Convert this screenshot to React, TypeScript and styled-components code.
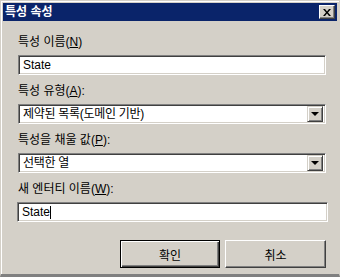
import React from 'react';
import styled, { createGlobalStyle } from 'styled-components';

const GlobalStyle = createGlobalStyle`
  html, body {
    margin: 0;
    padding: 0;
    background: #d4d0c8;
  }
  * {
    box-sizing: border-box;
  }
`;

const FONT = `"Liberation Sans", "Noto Sans CJK KR", sans-serif`;

const Window = styled.div`
  width: 340px;
  height: 277px;
  padding: 2px;
  background: #d4d0c8;
  border: 1px solid #d4d0c8;
  border-bottom: 3px solid #808080;
  box-shadow: inset 1px 1px #ffffff;
  display: flex;
  flex-direction: column;
  font-family: ${FONT};
  font-size: 12px;
  color: #000;
`;

const TitleBar = styled.div`
  height: 18px;
  background: #0a246a;
  display: flex;
  align-items: center;
  justify-content: space-between;
  padding: 0 2px 0 2px;
`;

const Title = styled.span`
  color: #ffffff;
  font-weight: bold;
  font-size: 12px;
  line-height: 14px;
`;

const CloseButton = styled.div`
  width: 16px;
  height: 14px;
  background: #d4d0c8;
  border: 1px solid;
  border-color: #ffffff #404040 #404040 #ffffff;
  box-shadow: inset -1px -1px #808080;
  display: flex;
  align-items: center;
  justify-content: center;
`;

const Body = styled.div`
  flex: 1;
  display: flex;
  flex-direction: column;
  padding: 14px 11px 0 15px;
`;

const Group = styled.div`
  display: flex;
  flex-direction: column;
  gap: 6px;
  margin-bottom: 9px;
`;

const Label = styled.div`
  line-height: 14px;
  height: 14px;
  white-space: nowrap;
`;

const Field = styled.div<{ $wide?: boolean }>`
  height: 20px;
  width: ${(p) => (p.$wide ? '311px' : '308px')};
  margin-left: ${(p) => (p.$wide ? '-1px' : '0')};
  background: #ffffff;
  border: 1px solid;
  border-color: #808080 #ffffff #ffffff #808080;
  box-shadow: inset 1px 1px #404040, inset -1px -1px #d4d0c8;
  display: flex;
  align-items: center;
  padding: 0 2px 0 4px;
  line-height: 16px;
  white-space: nowrap;
`;

const FieldText = styled.span`
  flex: 1;
  letter-spacing: -0.3px;
`;

const Caret = styled.span`
  display: inline-block;
  width: 1px;
  height: 13px;
  background: #000;
  vertical-align: middle;
`;

const DropButton = styled.div`
  width: 16px;
  height: 16px;
  background: #d4d0c8;
  border: 1px solid;
  border-color: #d4d0c8 #404040 #404040 #d4d0c8;
  box-shadow: inset 1px 1px #ffffff, inset -1px -1px #808080;
  display: flex;
  align-items: center;
  justify-content: center;
`;

const Arrow = styled.span`
  width: 0;
  height: 0;
  border-left: 4px solid transparent;
  border-right: 4px solid transparent;
  border-top: 4px solid #000;
`;

const ButtonRow = styled.div`
  display: flex;
  justify-content: flex-end;
  gap: 5px;
  margin-top: 9px;
`;

const Button = styled.div<{ $default?: boolean; $width: number }>`
  width: ${(p) => p.$width}px;
  height: 28px;
  background: #d4d0c8;
  border: 1px solid;
  border-color: ${(p) =>
    p.$default ? '#000000' : '#ffffff #404040 #404040 #ffffff'};
  box-shadow: ${(p) =>
    p.$default
      ? 'inset 1px 1px #ffffff, inset -1px -1px #404040, inset -2px -2px #808080'
      : 'inset -1px -1px #808080'};
  display: flex;
  align-items: center;
  justify-content: center;
  font-size: 12px;
`;

const CloseIcon = () => (
  <svg width="8" height="7" viewBox="0 0 8 7">
    <path d="M0 0h2l2 2.5L6 0h2L5 3.5 8 7H6L4 4.5 2 7H0l3-3.5z" fill="#000" />
  </svg>
);

const Select = ({ value }: { value: string }) => (
  <Field>
    <FieldText>{value}</FieldText>
    <DropButton>
      <Arrow />
    </DropButton>
  </Field>
);

export default function App() {
  return (
    <>
      <GlobalStyle />
      <Window>
        <TitleBar>
          <Title>특성 속성</Title>
          <CloseButton>
            <CloseIcon />
          </CloseButton>
        </TitleBar>
        <Body>
          <Group>
            <Label>
              특성 이름(<u>N</u>)
            </Label>
            <Field>State</Field>
          </Group>
          <Group>
            <Label>
              특성 유형(<u>A</u>):
            </Label>
            <Select value="제약된 목록(도메인 기반)" />
          </Group>
          <Group>
            <Label>
              특성을 채울 값(<u>P</u>):
            </Label>
            <Select value="선택한 열" />
          </Group>
          <Group>
            <Label>
              새 엔터티 이름(<u>W</u>):
            </Label>
            <Field $wide>
              State
              <Caret />
            </Field>
          </Group>
          <ButtonRow>
            <Button $default $width={100}>
              확인
            </Button>
            <Button $width={101}>취소</Button>
          </ButtonRow>
        </Body>
      </Window>
    </>
  );
}
